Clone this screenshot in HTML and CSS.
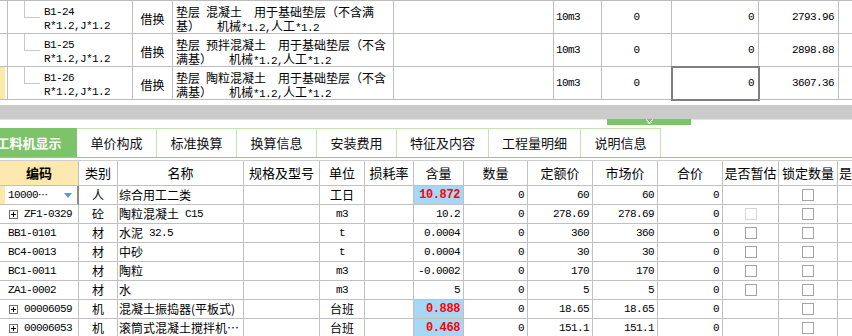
FILE: index.html
```html
<!DOCTYPE html>
<html lang="zh-CN">
<head>
    <meta charset="UTF-8">
    <title>工料机显示</title>
    <link rel="stylesheet" href="styles.css">
</head>
<body>
    <!-- upper grid: replaced quota items -->
    <div class="top">
        <div class="trow">
            <div class="tc"></div>
            <div class="tc code"><span class="num">B1-24</span><span class="num">R*1.2,J*1.2</span></div>
            <div class="tc mid type">借换</div>
            <div class="tc name"><div>垫层<span class="sp6"></span>混凝土<span class="sp12"></span>用于基础垫层（不含满</div><div>基）<span class="sp17"></span>机械<span class="num">*1.2,</span>人工<span class="num">*1.2</span></div></div>
            <div class="tc"></div>
            <div class="tc unit"><span class="num">10m3</span></div>
            <div class="tc mid"><span class="num">0</span></div>
            <div class="tc right"><span class="num">0</span></div>
            <div class="tc right"><span class="num">2793.96</span></div>
            <div class="tc last"></div>
        </div>
        <div class="trow">
            <div class="tc"></div>
            <div class="tc code"><span class="num">B1-25</span><span class="num">R*1.2,J*1.2</span></div>
            <div class="tc mid type">借换</div>
            <div class="tc name"><div>垫层<span class="sp6"></span>预拌混凝土<span class="sp12"></span>用于基础垫层（不含</div><div>满基）<span class="sp17"></span>机械<span class="num">*1.2,</span>人工<span class="num">*1.2</span></div></div>
            <div class="tc"></div>
            <div class="tc unit"><span class="num">10m3</span></div>
            <div class="tc mid"><span class="num">0</span></div>
            <div class="tc right"><span class="num">0</span></div>
            <div class="tc right"><span class="num">2898.88</span></div>
            <div class="tc last"></div>
        </div>
        <div class="trow current">
            <div class="tc marker"></div>
            <div class="tc code"><span class="num">B1-26</span><span class="num">R*1.2,J*1.2</span></div>
            <div class="tc mid type">借换</div>
            <div class="tc name"><div>垫层<span class="sp6"></span>陶粒混凝土<span class="sp12"></span>用于基础垫层（不含</div><div>满基）<span class="sp17"></span>机械<span class="num">*1.2,</span>人工<span class="num">*1.2</span></div></div>
            <div class="tc"></div>
            <div class="tc unit"><span class="num">10m3</span></div>
            <div class="tc mid"><span class="num">0</span></div>
            <div class="tc right selected"><span class="num">0</span></div>
            <div class="tc right"><span class="num">3607.36</span></div>
            <div class="tc last"></div>
        </div>
    </div>

    <div class="splitter"></div>
    <div class="split-base">
        <div class="grip">
            <svg width="9" height="6" viewBox="0 0 9 6"><path d="M1 0.5L4.5 3.5L8 0.5M2.5 3L4.5 5L6.5 3" fill="none" stroke="#fff" stroke-width="1"/></svg>
        </div>
    </div>

    <div class="tabs">
        <div class="tab active">工料机显示</div>
        <div class="tab">单价构成</div>
        <div class="tab">标准换算</div>
        <div class="tab">换算信息</div>
        <div class="tab">安装费用</div>
        <div class="tab wide">特征及内容</div>
        <div class="tab wide">工程量明细</div>
        <div class="tab">说明信息</div>
    </div>

    <!-- lower grid: labour, material and machine -->
    <div class="bottom">
        <div class="brow head">
            <div class="bc key">编码</div>
            <div class="bc mid">类别</div>
            <div class="bc mid">名称</div>
            <div class="bc mid">规格及型号</div>
            <div class="bc mid">单位</div>
            <div class="bc mid">损耗率</div>
            <div class="bc mid">含量</div>
            <div class="bc mid">数量</div>
            <div class="bc mid">定额价</div>
            <div class="bc mid">市场价</div>
            <div class="bc mid">合价</div>
            <div class="bc mid">是否暂估</div>
            <div class="bc mid">锁定数量</div>
            <div class="bc mid">是否计价</div>
        </div>

        <div class="brow current">
            <div class="bc code editing"><span class="num">10000</span><span class="dots">⋯</span>
                <svg class="drop" width="8" height="5" viewBox="0 0 8 5"><path d="M0 0H8L4 5Z" fill="#5a9bd6"/></svg>
            </div>
            <div class="bc mid">人</div>
            <div class="bc">综合用工二类</div>
            <div class="bc"></div>
            <div class="bc mid">工日</div>
            <div class="bc"></div>
            <div class="bc right hl"><span class="num red">10.872</span></div>
            <div class="bc right"><span class="num">0</span></div>
            <div class="bc right"><span class="num">60</span></div>
            <div class="bc right"><span class="num">60</span></div>
            <div class="bc right"><span class="num">0</span></div>
            <div class="bc mid"></div>
            <div class="bc mid"><span class="cb"></span></div>
            <div class="bc"></div>
        </div>

        <div class="brow">
            <div class="bc code"><svg class="plus" width="9" height="9" viewBox="0 0 9 9"><rect x="0.5" y="0.5" width="8" height="8" fill="#fff" stroke="#707070"/><path d="M2 4.5H7M4.5 2V7" stroke="#000"/></svg><span class="num">ZF1-0329</span></div>
            <div class="bc mid">砼</div>
            <div class="bc">陶粒混凝土<span class="sp6"></span><span class="num">C15</span></div>
            <div class="bc"></div>
            <div class="bc mid"><span class="num">m3</span></div>
            <div class="bc"></div>
            <div class="bc right"><span class="num">10.2</span></div>
            <div class="bc right"><span class="num">0</span></div>
            <div class="bc right"><span class="num">278.69</span></div>
            <div class="bc right"><span class="num">278.69</span></div>
            <div class="bc right"><span class="num">0</span></div>
            <div class="bc mid"><span class="cb off"></span></div>
            <div class="bc mid"><span class="cb"></span></div>
            <div class="bc"></div>
        </div>

        <div class="brow">
            <div class="bc code"><span class="num">BB1-0101</span></div>
            <div class="bc mid">材</div>
            <div class="bc">水泥<span class="sp6"></span><span class="num">32.5</span></div>
            <div class="bc"></div>
            <div class="bc mid"><span class="num">t</span></div>
            <div class="bc"></div>
            <div class="bc right"><span class="num">0.0004</span></div>
            <div class="bc right"><span class="num">0</span></div>
            <div class="bc right"><span class="num">360</span></div>
            <div class="bc right"><span class="num">360</span></div>
            <div class="bc right"><span class="num">0</span></div>
            <div class="bc mid"><span class="cb"></span></div>
            <div class="bc mid"><span class="cb"></span></div>
            <div class="bc"></div>
        </div>

        <div class="brow">
            <div class="bc code"><span class="num">BC4-0013</span></div>
            <div class="bc mid">材</div>
            <div class="bc">中砂</div>
            <div class="bc"></div>
            <div class="bc mid"><span class="num">t</span></div>
            <div class="bc"></div>
            <div class="bc right"><span class="num">0.0004</span></div>
            <div class="bc right"><span class="num">0</span></div>
            <div class="bc right"><span class="num">30</span></div>
            <div class="bc right"><span class="num">30</span></div>
            <div class="bc right"><span class="num">0</span></div>
            <div class="bc mid"><span class="cb"></span></div>
            <div class="bc mid"><span class="cb"></span></div>
            <div class="bc"></div>
        </div>

        <div class="brow">
            <div class="bc code"><span class="num">BC1-0011</span></div>
            <div class="bc mid">材</div>
            <div class="bc">陶粒</div>
            <div class="bc"></div>
            <div class="bc mid"><span class="num">m3</span></div>
            <div class="bc"></div>
            <div class="bc right"><span class="num">-0.0002</span></div>
            <div class="bc right"><span class="num">0</span></div>
            <div class="bc right"><span class="num">170</span></div>
            <div class="bc right"><span class="num">170</span></div>
            <div class="bc right"><span class="num">0</span></div>
            <div class="bc mid"><span class="cb"></span></div>
            <div class="bc mid"><span class="cb"></span></div>
            <div class="bc"></div>
        </div>

        <div class="brow">
            <div class="bc code"><span class="num">ZA1-0002</span></div>
            <div class="bc mid">材</div>
            <div class="bc">水</div>
            <div class="bc"></div>
            <div class="bc mid"><span class="num">m3</span></div>
            <div class="bc"></div>
            <div class="bc right"><span class="num">5</span></div>
            <div class="bc right"><span class="num">0</span></div>
            <div class="bc right"><span class="num">5</span></div>
            <div class="bc right"><span class="num">5</span></div>
            <div class="bc right"><span class="num">0</span></div>
            <div class="bc mid"><span class="cb"></span></div>
            <div class="bc mid"><span class="cb"></span></div>
            <div class="bc"></div>
        </div>

        <div class="brow">
            <div class="bc code"><svg class="plus" width="9" height="9" viewBox="0 0 9 9"><rect x="0.5" y="0.5" width="8" height="8" fill="#fff" stroke="#707070"/><path d="M2 4.5H7M4.5 2V7" stroke="#000"/></svg><span class="num">00006059</span></div>
            <div class="bc mid">机</div>
            <div class="bc">混凝土振捣器(平板式)</div>
            <div class="bc"></div>
            <div class="bc mid">台班</div>
            <div class="bc"></div>
            <div class="bc right hl"><span class="num red">0.888</span></div>
            <div class="bc right"><span class="num">0</span></div>
            <div class="bc right"><span class="num">18.65</span></div>
            <div class="bc right"><span class="num">18.65</span></div>
            <div class="bc right"><span class="num">0</span></div>
            <div class="bc mid"></div>
            <div class="bc mid"><span class="cb"></span></div>
            <div class="bc"></div>
        </div>

        <div class="brow">
            <div class="bc code"><svg class="plus" width="9" height="9" viewBox="0 0 9 9"><rect x="0.5" y="0.5" width="8" height="8" fill="#fff" stroke="#707070"/><path d="M2 4.5H7M4.5 2V7" stroke="#000"/></svg><span class="num">00006053</span></div>
            <div class="bc mid">机</div>
            <div class="bc">滚筒式混凝土搅拌机⋯</div>
            <div class="bc"></div>
            <div class="bc mid">台班</div>
            <div class="bc"></div>
            <div class="bc right hl"><span class="num red">0.468</span></div>
            <div class="bc right"><span class="num">0</span></div>
            <div class="bc right"><span class="num">151.1</span></div>
            <div class="bc right"><span class="num">151.1</span></div>
            <div class="bc right"><span class="num">0</span></div>
            <div class="bc mid"></div>
            <div class="bc mid"><span class="cb"></span></div>
            <div class="bc"></div>
        </div>
    </div>
</body>
</html>
```

FILE: styles.css
```css
* {
    margin: 0;
    padding: 0;
    box-sizing: border-box;
}

body {
    width: 852px;
    height: 336px;
    overflow: hidden;
    background: #fff;
    color: #000;
    font-family: "Noto Sans CJK SC", sans-serif;
    font-size: 12px;
    line-height: 14px;
}

.num {
    font-family: "Liberation Mono", monospace;
    font-size: 11px;
    letter-spacing: -0.6px;
}

.sp6,
.sp12,
.sp17 {
    display: inline-block;
}

.sp6 { width: 6px; }
.sp12 { width: 12px; }
.sp17 { width: 17px; }

/* upper grid */
.top {
    border-top: 1px solid #bdbdbd;
}

.trow {
    display: grid;
    grid-template-columns: 8px 125px 40px 221px 160px 48px 70px 87px 80px 20px;
    height: 33px;
}

.tc {
    border-right: 1px solid #bdbdbd;
    border-bottom: 1px solid #bdbdbd;
    display: flex;
    align-items: center;
    padding: 0 3px;
    white-space: nowrap;
    overflow: hidden;
}

.tc.last {
    border-right: none;
}

.tc.mid {
    justify-content: center;
}

.tc.right {
    justify-content: flex-end;
    padding-right: 4px;
}

.tc.type {
    padding-top: 4px;
}

.tc.unit {
    padding-left: 2px;
}

.tc.code {
    flex-direction: column;
    align-items: flex-start;
    justify-content: flex-start;
    padding: 4px 0 0 36px;
    background:
        linear-gradient(#c8c8c8, #c8c8c8) 16px 0 / 1px 17px no-repeat,
        linear-gradient(#c8c8c8, #c8c8c8) 16px 16px / 16px 1px no-repeat;
}

.tc.name {
    display: block;
    padding: 4px 0 0 3px;
}

.tc.name div {
    height: 14px;
}

.tc.marker {
    background: linear-gradient(#fce8a8, #fce8a8) 0 0 / 5px 100% no-repeat;
}

.tc.selected {
    outline: 2px solid #7f7f7f;
    outline-offset: -1px;
}

/* splitter */
.splitter {
    margin-top: 5px;
    height: 14px;
    background: #cbcbcb;
}

.split-base {
    height: 9px;
    padding-left: 607px;
    background: linear-gradient(#e3e3e3, #e3e3e3) 0 0 / 100% 1px no-repeat;
}

.grip {
    width: 84px;
    height: 6px;
    background: #7dc36a;
    display: flex;
    justify-content: center;
}

/* tabs */
.tabs {
    display: flex;
    height: 30px;
    margin-left: -18px;
    border-bottom: 1px solid #8fcb7b;
}

.tab {
    width: 80px;
    flex-shrink: 0;
    border-top: 1px solid #c2e4b0;
    border-right: 1px solid #c2e4b0;
    display: flex;
    align-items: center;
    justify-content: center;
    font-size: 13px;
    color: #111;
}

.tab.wide {
    width: 92px;
}

.tab.active {
    width: 95px;
    background: #7dc36a;
    border-color: #7dc36a;
    color: #fff;
    font-weight: bold;
}

/* lower grid */
.bottom {
    margin-top: 2px;
    border-top: 1px solid #cfcfcf;
}

.brow {
    display: grid;
    grid-template-columns: 79px 39px 126px 76px 45px 49px 50px 64px 65px 65px 65px 56px 59px 55px;
    height: 19px;
}

.brow.head {
    height: 25px;
    font-size: 13px;
}

.bc {
    border-right: 1px solid #c0c0c0;
    border-bottom: 1px solid #c0c0c0;
    display: flex;
    align-items: center;
    padding: 0 1px;
    white-space: nowrap;
    overflow: hidden;
}

.bc.mid {
    justify-content: center;
}

.bc.right {
    justify-content: flex-end;
    padding-right: 3px;
}

.bc.key {
    justify-content: center;
    background: #fde9b0;
    font-weight: bold;
}

.bc.code {
    padding-left: 8px;
}

.bc.editing {
    border-right: 2px solid #8a8a8a;
    background: linear-gradient(#fce8a8, #fce8a8) 0 0 / 5px 100% no-repeat;
}

.dots {
    font-size: 10px;
}

.drop {
    margin-left: auto;
    margin-right: 4px;
}

.plus {
    margin: 0 6px 0 1px;
    flex-shrink: 0;
}

.bc.hl {
    background: #a6d7f4;
}

.num.red {
    color: #f00;
    font-weight: bold;
    font-size: 12px;
    letter-spacing: -0.4px;
}

.cb {
    width: 12px;
    height: 12px;
    border: 1px solid #a3a3a3;
    background: #fff;
}

.cb.off {
    border-color: #d6d6d6;
}
```
